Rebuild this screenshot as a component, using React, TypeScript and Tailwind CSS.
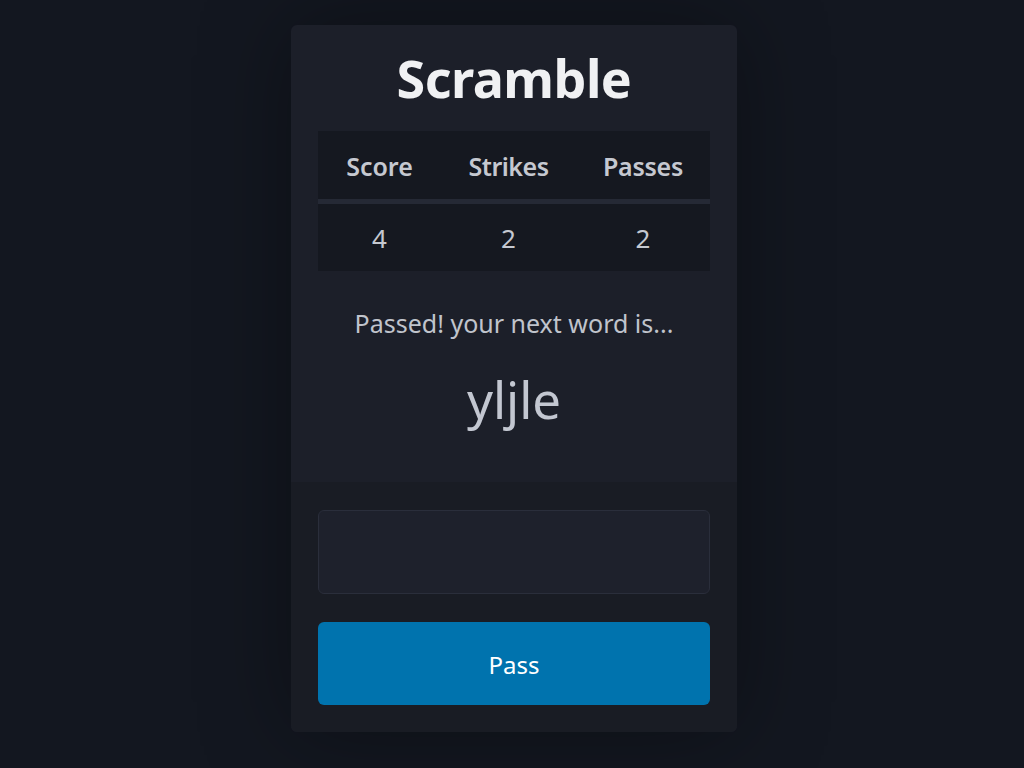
export default function App() {
  return (
    <div
      className="min-h-screen w-full bg-[#131720] flex justify-center pl-[4px] pt-[25px] pb-[36px]"
      style={{ fontFamily: '"Noto Sans", "Open Sans", sans-serif' }}
    >
      <div className="w-[446px] h-[707px] rounded-[6px] overflow-hidden bg-[#1c1f29] shadow-[0_0_90px_rgba(0,0,0,0.35)] flex flex-col">
        <div className="px-[27px] flex flex-col">
          <div className="h-[106px] flex items-center justify-center">
            <h1 className="text-[52px] leading-none font-bold text-[#f0f1f3] tracking-[-0.01em]">Scramble</h1>
          </div>

          <div className="bg-[#151820]">
            <div className="grid grid-cols-[123px_135px_134px] h-[73px] pt-[4px] items-center text-center text-[25px] font-semibold text-[#c5c8d0] border-b-[5px] border-[#252935]">
              <span>Score</span>
              <span className="tracking-[-0.02em]">Strikes</span>
              <span className="tracking-[-0.01em]">Passes</span>
            </div>
            <div className="grid grid-cols-[123px_135px_134px] h-[67px] pt-[2px] items-center text-center text-[26px] text-[#c5c8d0]">
              <span>4</span>
              <span>2</span>
              <span>2</span>
            </div>
          </div>

          <p className="mt-[32px] leading-[40px] text-[25px] text-center text-[#c0c4cc]">Passed! your next word is...</p>
          <p className="mt-[24px] leading-[64px] text-[51px] text-center text-[#c3c7d1]">yljle</p>
        </div>

        <div className="mt-auto h-[250px] bg-[#191c24] px-[27px] pt-[28px] flex flex-col gap-[28px]">
          <input
            type="text"
            className="h-[84px] w-full rounded-[6px] border border-[#2a2e3b] bg-[#1e212c] outline-none px-4 text-[26px] text-[#c5c8d0]"
          />
          <button className="h-[83px] w-full rounded-[6px] bg-[#0073ae] text-white text-[24px] pt-[3px]">Pass</button>
        </div>
      </div>
    </div>
  )
}
